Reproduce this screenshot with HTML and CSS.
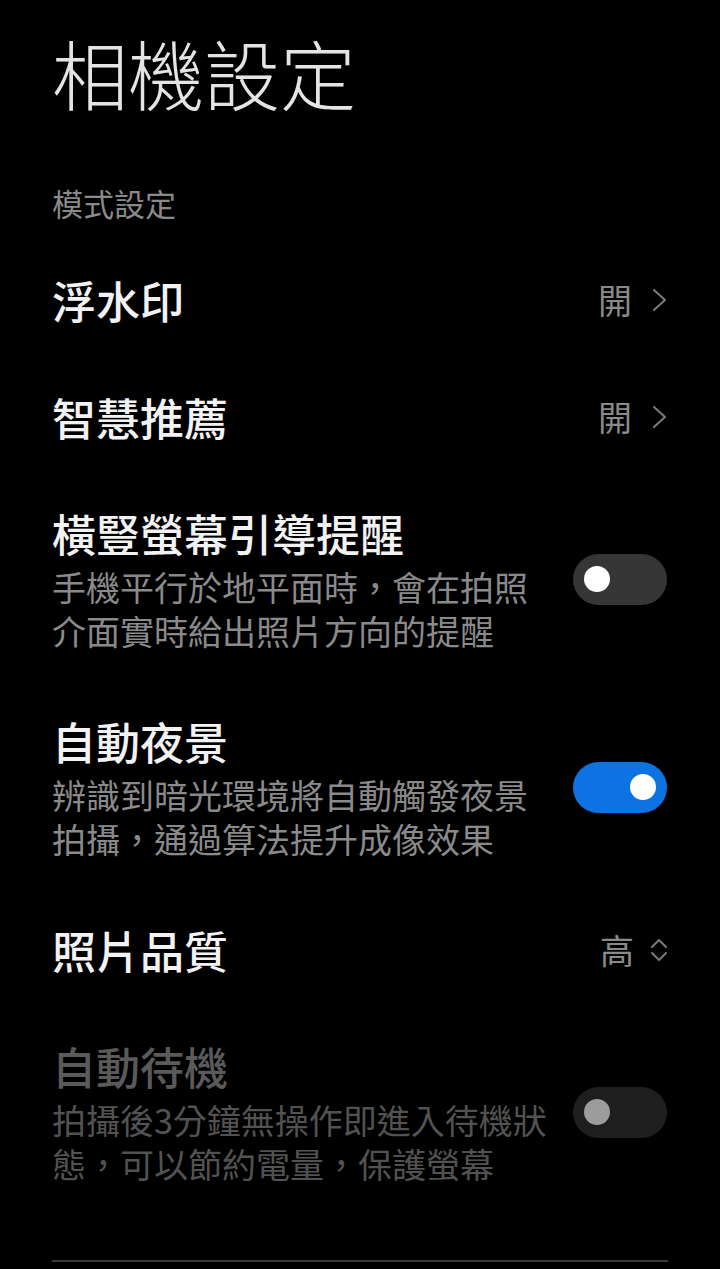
FILE: index.html
```html
<!DOCTYPE html>
<html lang="zh-Hant">
<head>
<meta charset="utf-8">
<title>相機設定</title>
<link rel="stylesheet" href="styles.css">
</head>
<body>
<div class="page">
  <h1 class="title">相機設定</h1>
  <div class="section">模式設定</div>

  <div class="row simple">
    <div class="label">浮水印</div>
    <div class="value">開<svg class="chev" width="16" height="22" viewBox="0 0 16 22"><path d="M2 1 L13 11 L2 21" fill="none" stroke="#7a7a7a" stroke-width="2" stroke-linecap="round" stroke-linejoin="round"/></svg></div>
  </div>

  <div class="row simple">
    <div class="label">智慧推薦</div>
    <div class="value">開<svg class="chev" width="16" height="22" viewBox="0 0 16 22"><path d="M2 1 L13 11 L2 21" fill="none" stroke="#7a7a7a" stroke-width="2" stroke-linecap="round" stroke-linejoin="round"/></svg></div>
  </div>

  <div class="row desc-row">
    <div class="text">
      <div class="label">橫豎螢幕引導提醒</div>
      <div class="desc">手機平行於地平面時，會在拍照介面實時給出照片方向的提醒</div>
    </div>
    <div class="switch off"><span class="knob"></span></div>
  </div>

  <div class="row desc-row">
    <div class="text">
      <div class="label">自動夜景</div>
      <div class="desc">辨識到暗光環境將自動觸發夜景拍攝，通過算法提升成像效果</div>
    </div>
    <div class="switch on"><span class="knob"></span></div>
  </div>

  <div class="row simple">
    <div class="label">照片品質</div>
    <div class="value">高<svg class="updown" width="20" height="28" viewBox="0 0 20 28"><path d="M3 11 L10 4 L17 11 M3 17 L10 24 L17 17" fill="none" stroke="#7a7a7a" stroke-width="2" stroke-linecap="round" stroke-linejoin="round"/></svg></div>
  </div>

  <div class="row desc-row disabled">
    <div class="text">
      <div class="label">自動待機</div>
      <div class="desc">拍攝後3分鐘無操作即進入待機狀態，可以節約電量，保護螢幕</div>
    </div>
    <div class="switch dis"><span class="knob"></span></div>
  </div>

  <div class="divider"></div>
</div>
</body>
</html>
```
FILE: styles.css
```css
html, body {
  margin: 0;
  padding: 0;
  background: #000;
}
body {
  font-family: "Noto Sans CJK TC", "Noto Sans CJK SC", sans-serif;
  color: #f0f0f0;
}
.page {
  width: 720px;
  height: 1269px;
  box-sizing: border-box;
  padding: 27px 53px 0 52px;
  overflow: hidden;
}
.title {
  margin: 0;
  font-size: 76px;
  line-height: 90px;
  font-weight: 300;
  color: #e4e4e4;
}
.section {
  margin-top: 66px;
  margin-bottom: 18px;
  font-size: 31px;
  line-height: 40px;
  color: #8a8a8a;
}
.row {
  display: flex;
  align-items: center;
  justify-content: space-between;
}
.row.simple {
  height: 117px;
}
.row.desc-row {
  padding: 30px 0;
}
.label {
  font-size: 44px;
  line-height: 56px;
  font-weight: 500;
  color: #f2f2f2;
}
.value {
  display: flex;
  align-items: center;
  font-size: 34px;
  line-height: 44px;
  color: #8a8a8a;
}
.chev {
  margin-left: 20px;
  margin-right: -1px;
}
.updown {
  margin-left: 15px;
  margin-right: -2px;
}
.text {
  width: 500px;
}
.desc {
  margin-top: 4px;
  font-family: "Noto Sans CJK SC", "Noto Sans CJK TC", sans-serif;
  font-size: 34px;
  line-height: 44px;
  color: #8a8a8a;
}
.switch {
  width: 94px;
  height: 51px;
  border-radius: 26px;
  box-sizing: border-box;
  padding: 0 11px;
  display: flex;
  align-items: center;
  flex-shrink: 0;
}
.knob {
  width: 26px;
  height: 26px;
  border-radius: 50%;
  background: #fff;
}
.switch.off {
  background: #363636;
  justify-content: flex-start;
}
.switch.on {
  background: #0d72e2;
  justify-content: flex-end;
}
.switch.dis {
  background: #1e1e1e;
  justify-content: flex-start;
}
.switch.dis .knob {
  background: #9c9c9c;
}
.disabled .label {
  color: #5a5a5a;
}
.disabled .desc {
  color: #525252;
}
.divider {
  margin-top: 44px;
  height: 2px;
  background: #3a3a3a;
  width: 616px;
}
```
